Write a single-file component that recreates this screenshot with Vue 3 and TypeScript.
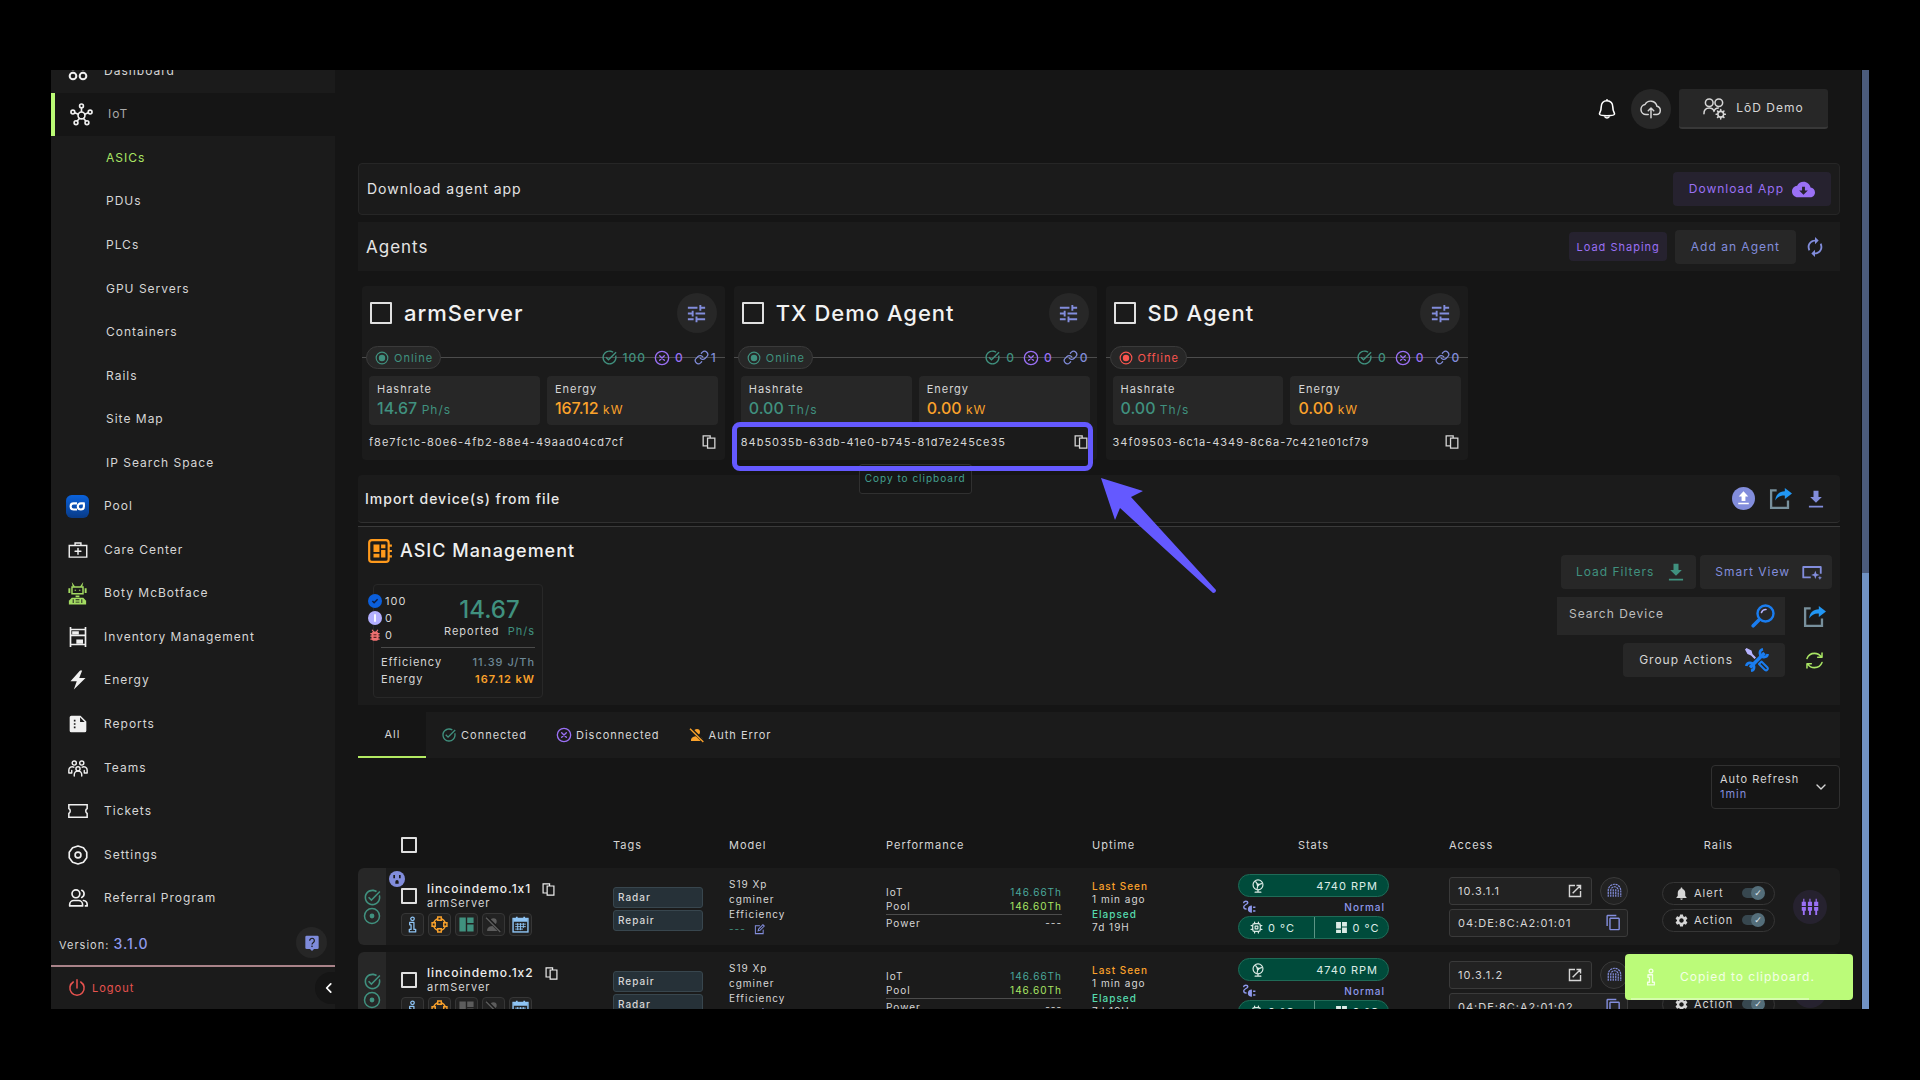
<script setup lang="ts">
import { h } from 'vue'
import type { FunctionalComponent } from 'vue'

const line = (body: string, width = 2) =>
  `<g fill="none" stroke="currentColor" stroke-width="${width}" stroke-linecap="round" stroke-linejoin="round">${body}</g>`
const fill = (d: string) => `<path fill="currentColor" fill-rule="evenodd" d="${d}"/>`

const icons: Record<string, string> = {
  dashboard: line('<circle cx="6" cy="6" r="4"/><circle cx="18" cy="6" r="4"/><circle cx="6" cy="18" r="4"/><circle cx="18" cy="18" r="4"/>', 2.4),
  iot: line('<circle cx="12" cy="13" r="3.6"/><circle cx="12" cy="3" r="2"/><circle cx="3" cy="9.500" r="2"/><circle cx="21" cy="9.500" r="2"/><circle cx="6.300" cy="20.500" r="2"/><circle cx="17.700" cy="20.500" r="2"/><path d="M12 5v4M5 10.200l3.600 1.500M19 10.200l-3.600 1.500M7.500 18.800l2.300-2.700M16.500 18.800l-2.300-2.700"/>', 1.7),
  pool: '<defs><linearGradient id="pool-fill" x2="0" y2="1"><stop stop-color="#0a62dc"/><stop offset="1" stop-color="#083a86"/></linearGradient></defs><rect width="24" height="24" rx="6" fill="url(#pool-fill)"/><path fill="none" stroke="#fff" stroke-width="2.200" d="M11.500 8.700H8a3.200 3.200 0 0 0 0 6.400h3.500M19.500 8.700H15.500a3.200 3.200 0 1 0 3.200 3.200V8.700"/>',
  care: line('<path d="M1.500 6.500h21v14h-21zM8.500 6.500v-3h7v3M12 10v7M8.500 13.500h7" stroke-linejoin="miter"/>', 1.7),
  boty: '<g fill="#a4dc62"><path d="M6 0l3.500 5H7zM18 0l-3.500 5H17z"/><path fill-rule="evenodd" d="M5.500 4.500h13V13h-13zM7 6v5.500h10V6z"/><path d="M2.500 6.500h2v5h-2zM19.500 6.500h2v5h-2zM10 14h4v2h-4z"/><path d="M6 16.500h12l3 3v4H3v-4z"/></g><path fill="#1b1b1b" d="M7 18h1v4H7zM16 18h1v4h-1zM10 18h4v1h-4zM10 20.500h4v1h-4z"/><path fill="#a4dc62" d="M9 8h1.500v1H9zM13.500 8H15v1h-1.500z"/>',
  inventory: fill('M2 0h2v2h16V0h2v24h-2v-2H4v2H2zM4 4v5h16V4zM4 11v9h16v-9z') + '<path fill="currentColor" d="M5 5h8v4H5zM10 15h8v5h-8z"/>',
  bolt: fill('M14.500 0.500L3 13.500h7.500L7 23.500L21 9.500h-7.500L17 0.500z'),
  report: fill('M4 2h11l7 7v11a2 2 0 0 1-2 2H4a2 2 0 0 1-2-2V4a2 2 0 0 1 2-2zm10.500 2v5.500H20zM7 7v2h2V7zm0 4v2h2v-2zm0 4v2h2v-2z'),
  teams: line('<circle cx="7.500" cy="6" r="2.500"/><circle cx="16.500" cy="6" r="2.500"/><circle cx="12" cy="13" r="2.500"/><path d="M1 18v-3.500a4 4 0 0 1 6-3.500M23 18v-3.500a4 4 0 0 0-6-3.500M7.500 21.500V20a4.500 4.500 0 0 1 9 0v1.500M4.500 18v-3M19.500 18v-3M1 18h3.500M19.500 18H23"/>', 1.7),
  ticket: line('<path d="M1 4.500h22v4.500a3.500 3.500 0 0 0 0 6v4.500H1V15a3.500 3.500 0 0 0 0-6z" stroke-linejoin="miter"/>', 1.8),
  settings: line('<path d="M12 1.200l6.500 2.200 4 5.200v6.800l-4 5.200L12 22.800l-6.500-2.200-4-5.200V8.600l4-5.200z"/><circle cx="12" cy="12" r="3.500"/>', 2),
  referral: line('<circle cx="9.500" cy="7" r="4.700"/><path d="M2 21.500v-1.500a5 5 0 0 1 5-5h5.500a5 5 0 0 1 5 5v1.500zM16.500 2.700a4.700 4.700 0 0 1 0 8.600M18.500 15a5 5 0 0 1 4.500 5v1.500h-2"/>', 2),
  help: fill('M4 1h16a2 2 0 0 1 2 2v16a2 2 0 0 1-2 2h-5l-3 3-3-3H4a2 2 0 0 1-2-2V3a2 2 0 0 1 2-2z') + '<path fill="none" stroke="#1c1c1c" stroke-width="1.800" d="M8.500 8.500a3.500 3.500 0 1 1 5.500 2.800c-1.500 1-2 1.500-2 3"/><circle cx="12" cy="17" r="1.200" fill="#1c1c1c"/>',
  power: line('<path d="M12 1v11M7 4a9.500 9.500 0 1 0 10 0"/>', 2),
  left: line('<path d="M15 5l-7 7 7 7"/>', 3),
  down: line('<path d="M4 8l8 8 8-8"/>', 2.8),
  bell: line('<path d="M12 2c-4.500 0-7 3.500-7 8 0 5-2 6-2 8 0 1.500 4 2 9 2s9-.500 9-2c0-2-2-3-2-8 0-4.500-2.500-8-7-8z"/><path d="M9.500 21.500a3 3 0 0 0 5 0M12 .800v1" stroke-width="1.800"/>', 1.9),
  cloudUp: line('<path d="M9 18H6.500a5.500 5.500 0 0 1-1-10.900A7 7 0 0 1 18.500 9a4.600 4.600 0 0 1 0 9H15M12 21.500V11.500M9 14l3-3 3 3"/>', 1.6),
  userGear: line('<circle cx="6.500" cy="6" r="4"/><circle cx="16.500" cy="6" r="4"/><path d="M1 17.500c0-4 2-6 5.500-6s4.500 1.500 5 3.500c.500-2 2-3.500 4.500-3.500"/><circle cx="18.500" cy="18" r="3"/><path d="M18.500 13v1.500M18.500 21.500V23M13.700 18h1.500M21.800 18h1.500M15.200 14.700l1 1M20.800 20.300l1 1M21.800 14.700l-1 1M16.200 20.300l-1 1"/>', 1.6),
  cloudDown: fill('M19.350 10.040C18.670 6.590 15.640 4 12 4 9.110 4 6.600 5.640 5.350 8.040 2.340 8.360 0 10.910 0 14c0 3.310 2.690 6 6 6h13c2.760 0 5-2.240 5-5 0-2.640-2.050-4.780-4.650-4.960zM12 17.500L7.500 13h3V9h3v4h3z'),
  sync: '<g transform="matrix(-1 0 0 1 24 0)">' + fill('M12 4V1L8 5l4 4V6c3.310 0 6 2.690 6 6 0 1.010-.250 1.970-.700 2.800l1.460 1.460A7.930 7.930 0 0 0 20 12c0-4.420-3.580-8-8-8zm0 14c-3.310 0-6-2.690-6-6 0-1.010.250-1.970.700-2.800L5.240 7.740A7.930 7.930 0 0 0 4 12c0 4.420 3.580 8 8 8v3l4-4-4-4v3z') + '</g>',
  recycle: line('<path d="M2.500 9.500C4 5.500 7.500 3 12 3c3.500 0 6.500 1.500 8.500 4.500M21.500 14.500C20 18.500 16.500 21 12 21c-3.500 0-6.500-1.500-8.500-4.500M21.500 2.500v5.500H16M2.500 21.500V16H8"/>', 1.9),
  tune: fill('M3 17v2h6v-2H3zM3 5v2h10V5H3zm10 16v-2h8v-2h-8v-2h-2v6h2zM7 9v2H3v2h4v2h2V9H7zm14 4v-2H11v2h10zm-6-4h2V7h4V5h-4V3h-2v6z'),
  target: line('<circle cx="12" cy="12" r="10"/>', 2) + '<circle cx="12" cy="12" r="5.500" fill="currentColor"/>',
  record: line('<circle cx="12" cy="12" r="10"/>', 2) + '<circle cx="12" cy="12" r="3.200" fill="currentColor"/>',
  check: fill('M22 5.180 10.590 16.600l-4.240-4.240 1.410-1.410 2.830 2.830 10-10L22 5.180zm-2.210 5.040c.130.570.210 1.170.210 1.780 0 4.420-3.580 8-8 8s-8-3.580-8-8 3.580-8 8-8c1.580 0 3.040.460 4.280 1.250l1.440-1.440C16.100 2.670 14.130 2 12 2 6.480 2 2 6.480 2 12s4.480 10 10 10 10-4.480 10-10c0-1.190-.220-2.330-.600-3.390l-1.610 1.610z'),
  cross: line('<circle cx="12" cy="12" r="10"/><path d="M8.500 8.500l7 7M15.500 8.500l-7 7"/>', 2),
  link: line('<path d="M10 13a5 5 0 0 0 7.540.540l3-3a5 5 0 0 0-7.070-7.070l-1.720 1.710M14 11a5 5 0 0 0-7.540-.540l-3 3a5 5 0 0 0 7.070 7.070l1.710-1.710"/>', 2),
  copy: line('<path d="M8.500 18.500H2v-17h12v3.500M9.500 5.500h12.500v17H9.500z" stroke-linecap="butt" stroke-linejoin="miter"/>', 2.2),
  copyFiles: fill('M16 1H4c-1.100 0-2 .900-2 2v14h2V3h12V1zm3 4H8c-1.100 0-2 .900-2 2v14c0 1.100.900 2 2 2h11c1.100 0 2-.900 2-2V7c0-1.100-.900-2-2-2zm0 16H8V7h11v14z'),
  upCircle: '<circle cx="12" cy="12" r="12" fill="currentColor"/><path fill="#fff" d="M12 4.500L7 10h3v4.500h4V10h3zM6.500 16.500h11V18h-11z"/>',
  share: '<path fill="none" stroke="#78909c" stroke-width="2.400" d="M8 3.500H2.200v18.300h17.600V14"/><path fill="#2196f3" d="M16.500 1L24 6.700l-7.500 5.700V9C12 8.800 9 10.500 6.500 14 7 8 10.500 4.700 16.500 4.500z"/>',
  download: fill('M19 9.500h-4V2H9v7.500H5l7 7 7-7zM3.500 20v2.200h17V20z'),
  smart: line('<path d="M10.500 18.500H1.500V6h21v8" stroke-linecap="butt"/>', 2.2) + '<path fill="currentColor" d="M16 10.500l1.300 3.700 3.700 1.300-3.700 1.300L16 20.500l-1.300-3.700L11 15.500l3.700-1.300zM21.500 16.500l.700 1.800 1.800.700-1.800.700-.700 1.800-.700-1.800L19 19l1.800-.700z"/>',
  search: '<circle cx="14.500" cy="9.500" r="8" fill="none" stroke="#1a7df0" stroke-width="2.400"/><path stroke="#1a7df0" stroke-width="3.600" stroke-linecap="round" d="M2.200 21.800l6-6"/><path fill="none" stroke="#b7b4ff" stroke-width="1.600" stroke-linecap="round" d="M10.500 8.500a4.500 4.500 0 0 1 4.500-3"/>',
  tools: '<path stroke="#1a7df0" stroke-width="3.600" d="M5 19.500L19.500 5"/><path fill="none" stroke="#1a7df0" stroke-width="2.600" d="M18 1.200a4 4 0 1 0 4.800 4.800M1.200 18A4 4 0 1 1 6 22.800"/><path fill="none" stroke="#1a7df0" stroke-width="2" stroke-linejoin="round" d="M14 16l2.500-2.500 6 6a1.800 1.800 0 0 1-2.500 2.500z"/><path fill="#b7b4ff" d="M0 1.500L1.500 0l5 2.500 1 3.500 3.500 3.500-1.500 1.500L6 7.500 2.500 6z"/>',
  board: line('<rect x="2" y="2" width="18" height="20" rx="2.500"/><path d="M20 7h3M20 12h3M20 17h3" stroke-linecap="butt"/>', 2) + '<path fill="currentColor" d="M6 6h5.500v7H6zM13 6h4v3.500h-4zM6 14.500h5.500V18H6zM13 11h4v7h-4z"/>',
  verified: '<circle cx="12" cy="12" r="12" fill="#0b5fdc"/><path fill="none" stroke="#111c3c" stroke-width="2.400" d="M7.500 12l3 3 6-6"/>',
  pause: '<circle cx="12" cy="12" r="12" fill="#b3afff"/><path fill="#fff" d="M10.500 5.500h3v13h-3z"/>',
  bug: '<g fill="none" stroke="#ee7070" stroke-width="2"><path d="M7 3l3 4M17 3l-3 4M4 9.500h16M4 14h16M4 19h16"/></g><rect x="6" y="6" width="12" height="16" rx="5" fill="#ee7070"/><path stroke="#5c1f1f" stroke-width="2" d="M9.500 11.500h5M9.500 16h5"/>',
  noUser: fill('M12 3a4.500 4.500 0 1 1 0 9 4.500 4.500 0 0 1 0-9zM3 20c0-4 4-6 9-6s9 2 9 6v1H3z') + '<path stroke="#1b1b1b" stroke-width="5" d="M2 2l20 20"/><path stroke="currentColor" stroke-width="2" d="M1.500 2.500l20 20"/>',
  socket: '<circle cx="12" cy="12" r="12" fill="#828ddc"/><path fill="#1a1a1a" d="M6.500 6h2.500v5H6.500zM15 6h2.500v5H15zM9.500 19v-3a2.500 2.500 0 0 1 5 0v3z"/>',
  info: '<g fill="none" stroke="currentColor" stroke-width="1.800" stroke-linejoin="round"><circle cx="12" cy="4" r="2.500"/><path d="M8 9h6v10h2.500v3.500h-9V19H10v-6.500H8z"/></g>',
  ring: '<g fill="none" stroke="currentColor" stroke-width="2"><circle cx="12" cy="12" r="8.500"/><g fill="#222"><path d="M9.500 1.500h5v4.500h-5zM9.500 18h5v4.500h-5zM1.500 9.500H6v5H1.500zM18 9.500h4.500v5H18z"/></g></g>',
  blocks: fill('M2 2h9v20H2zM13 2h9v8h-9zM13 12h9v10h-9z'),
  calendar: '<rect x="1.500" y="3.500" width="21" height="19" fill="none" stroke="currentColor" stroke-width="2"/><path fill="currentColor" d="M2 3.500h20V8H2zM5.500 1h2.500v4H5.500zM16 1h2.500v4H16z"/><path stroke="currentColor" stroke-width="1.300" d="M4.500 11.500h15M4.500 15h15M4.500 18.500h11M8 10v10M12 10v10M16 10v7"/>',
  edit: line('<path d="M12 4H3v17h17v-8M9 15l1-4 9.500-9.500 3 3L13 14z" stroke-linejoin="miter"/>', 2.2),
  fan: line('<circle cx="12" cy="10" r="8.500"/><path d="M12 10L8 4.500M12 10l6-2M12 10l-1.500 6.500M7 22.500h10M12 18.500v4"/><circle cx="12" cy="10" r="1.500"/>', 2),
  plug: line('<path d="M3 4.500C3 1.500 10 1.500 10 4.500S3 8 3 11.500s2 4 4 4"/>', 2.400) + '<path fill="currentColor" d="M17 9.500v12.500c-4.500 0-7-2.500-7-6.200s2.500-6.300 7-6.300zM19 11h4v2.500h-4zM19 17.500h4V20h-4z"/>',
  chip: line('<rect x="5" y="5" width="14" height="14" rx="3"/><rect x="9.500" y="9.500" width="5" height="5"/><path d="M8.500 2v3M15.500 2v3M8.500 19v3M15.500 19v3M2 8.500h3M2 15.500h3M19 8.500h3M19 15.500h3"/>', 2.2),
  grid: fill('M2 2h9v12H2zM13 2h9v8h-9zM2 16h9v6H2zM13 12h9v10h-9z'),
  openNew: line('<path d="M12 2.500H2.500v19h19V12M14.500 2.500h7v7M21 3L8 16" stroke-linecap="butt" stroke-linejoin="miter"/>', 2.4),
  finger: '<g fill="none" stroke="currentColor" stroke-width="1.900" stroke-dasharray="3.500 1"><path d="M2 22V12a10 10 0 0 1 20 0v10"/><path d="M6 22V12a6 6 0 0 1 12 0v10"/><path d="M10 22V10M14 22V10"/></g>',
  alert: fill('M12 22c1.100 0 2-.900 2-2h-4c0 1.100.900 2 2 2zm6-6v-5c0-3.070-1.640-5.640-4.500-6.320V4c0-.830-.670-1.500-1.500-1.500s-1.500.670-1.500 1.500v.680C7.630 5.360 6 7.920 6 11v5l-2 2v1h16v-1l-2-2z'),
  gear: fill('M19.140 12.940c.040-.300.060-.610.060-.940 0-.320-.020-.640-.070-.940l2.030-1.580c.180-.140.230-.410.120-.610l-1.920-3.320c-.120-.220-.370-.290-.590-.220l-2.390.960c-.500-.380-1.030-.700-1.620-.940l-.360-2.540c-.040-.240-.240-.410-.480-.410h-3.840c-.240 0-.430.170-.470.410l-.360 2.540c-.590.240-1.130.570-1.620.940l-2.390-.960c-.220-.080-.470 0-.590.220L2.740 8.870c-.120.210-.080.470.120.610l2.030 1.580c-.050.300-.090.630-.090.940s.020.640.070.940l-2.030 1.580c-.180.140-.230.410-.120.610l1.920 3.320c.120.220.370.290.590.220l2.390-.960c.500.380 1.030.700 1.620.940l.360 2.540c.050.240.240.410.480.410h3.840c.240 0 .440-.170.470-.410l.360-2.540c.590-.240 1.130-.560 1.620-.940l2.390.960c.220.080.470 0 .590-.220l1.920-3.320c.120-.220.070-.470-.120-.610l-2.010-1.580zM12 15.600c-1.980 0-3.600-1.620-3.600-3.600s1.620-3.600 3.600-3.600 3.600 1.620 3.600 3.600-1.620 3.600-3.600 3.600z'),
  rails: '<g fill="currentColor"><path d="M3 1h1.500v4H6.500v5.500H1V5h2zM1 12h5.500v5H5v5.500H2.500V17H1z"/><path d="M11.200 1h1.500v4h2v5.500H9.200V5h2zM9.200 12h5.500v5h-1.500v5.500h-2.500V17H9.200z"/><path d="M19.500 1H21v4h2v5.500h-5.500V5h2zM17.500 12H23v5h-1.500v5.500H19V17h-1.500z"/></g>',
}

const Icon: FunctionalComponent<{ name: string; size?: number }> = (props) =>
  h('svg', {
    class: 'icon',
    viewBox: '0 0 24 24',
    width: props.size ?? 18,
    height: props.size ?? 18,
    'aria-hidden': 'true',
    innerHTML: icons[props.name],
  })
Icon.props = ['name', 'size']

interface NavItem { label: string; icon?: string; kind?: 'active' | 'child' | 'current' }
const nav: NavItem[] = [
  { label: 'Dashboard', icon: 'dashboard' },
  { label: 'IoT', icon: 'iot', kind: 'active' },
  { label: 'ASICs', kind: 'current' },
  { label: 'PDUs', kind: 'child' },
  { label: 'PLCs', kind: 'child' },
  { label: 'GPU Servers', kind: 'child' },
  { label: 'Containers', kind: 'child' },
  { label: 'Rails', kind: 'child' },
  { label: 'Site Map', kind: 'child' },
  { label: 'IP Search Space', kind: 'child' },
  { label: 'Pool', icon: 'pool' },
  { label: 'Care Center', icon: 'care' },
  { label: 'Boty McBotface', icon: 'boty' },
  { label: 'Inventory Management', icon: 'inventory' },
  { label: 'Energy', icon: 'bolt' },
  { label: 'Reports', icon: 'report' },
  { label: 'Teams', icon: 'teams' },
  { label: 'Tickets', icon: 'ticket' },
  { label: 'Settings', icon: 'settings' },
  { label: 'Referral Program', icon: 'referral' },
]
const iconSize = (name: string) => (name === 'pool' || name === 'iot' || name === 'boty' ? 23 : 20)

const agents = [
  { name: 'armServer', online: true, up: 100, down: 0, links: 1, hash: '14.67', unit: 'Ph/s', energy: '167.12', id: 'f8e7fc1c-80e6-4fb2-88e4-49aad04cd7cf', copied: false },
  { name: 'TX Demo Agent', online: true, up: 0, down: 0, links: 0, hash: '0.00', unit: 'Th/s', energy: '0.00', id: '84b5035b-63db-41e0-b745-81d7e245ce35', copied: true },
  { name: 'SD Agent', online: false, up: 0, down: 0, links: 0, hash: '0.00', unit: 'Th/s', energy: '0.00', id: '34f09503-6c1a-4349-8c6a-7c421e01cf79', copied: false },
]

const tabs = [
  { label: 'All', icon: '', tone: '' },
  { label: 'Connected', icon: 'check', tone: 'teal' },
  { label: 'Disconnected', icon: 'cross', tone: 'violet' },
  { label: 'Auth Error', icon: 'noUser', tone: 'orange' },
]

const devices = [
  { name: 'lincoindemo.1x1', socket: true, tags: ['Radar', 'Repair'], blocks: 'teal', ip: '10.3.1.1', mac: '04:DE:8C:A2:01:01' },
  { name: 'lincoindemo.1x2', socket: false, tags: ['Repair', 'Radar'], blocks: 'dim', ip: '10.3.1.2', mac: '04:DE:8C:A2:01:02' },
]
const rails = [
  { label: 'Alert', icon: 'alert' },
  { label: 'Action', icon: 'gear' },
]
</script>

<template>
  <div class="stage">
    <div class="window">
      <aside class="sidebar">
        <nav class="nav">
          <a v-for="item in nav" :key="item.label" href="#" class="nav-item" :class="item.kind">
            <span v-if="item.icon" class="nav-icon"><Icon :name="item.icon" :size="iconSize(item.icon)" /></span>
            {{ item.label }}
          </a>
        </nav>
        <div class="version">
          <span>Version: <b>3.1.0</b></span>
          <button class="help" aria-label="Help"><Icon name="help" :size="16" /></button>
        </div>
        <div class="logout">
          <a href="#"><Icon name="power" :size="18" />Logout</a>
          <button class="collapse" aria-label="Collapse menu"><Icon name="left" :size="14" /></button>
        </div>
      </aside>

      <main class="main">
        <header class="topbar">
          <button class="plain" aria-label="Notifications"><Icon name="bell" :size="20" /></button>
          <button class="round" aria-label="Upload"><Icon name="cloudUp" :size="22" /></button>
          <button class="account"><Icon name="userGear" :size="23" />LōD Demo</button>
        </header>

        <section class="download">
          <h2>Download agent app</h2>
          <button class="btn violet-btn wide">Download App<Icon name="cloudDown" :size="23" /></button>
        </section>

        <section class="agents-bar">
          <h2>Agents</h2>
          <button class="btn violet-btn small">Load Shaping</button>
          <button class="btn peri wide">Add an Agent</button>
          <button class="plain peri sync" aria-label="Refresh agents"><Icon name="sync" :size="22" /></button>
        </section>

        <section class="agents">
          <article v-for="agent in agents" :key="agent.id" class="agent">
            <div class="agent-head">
              <label><input type="checkbox" class="box large" />{{ agent.name }}</label>
              <button class="round peri" aria-label="Agent settings"><Icon name="tune" :size="23" /></button>
            </div>
            <div class="agent-status">
              <span class="chip" :class="agent.online ? 'teal' : 'red'">
                <Icon name="target" :size="14" />{{ agent.online ? 'Online' : 'Offline' }}
              </span>
              <span class="count teal"><Icon name="check" :size="17" />{{ agent.up }}</span>
              <span class="count violet"><Icon name="cross" :size="16" />{{ agent.down }}</span>
              <span class="count links peri"><Icon name="link" :size="15" />{{ agent.links }}</span>
            </div>
            <div class="metrics">
              <div class="metric">
                <span>Hashrate</span>
                <span class="value teal"><b>{{ agent.hash }}</b> {{ agent.unit }}</span>
              </div>
              <div class="metric">
                <span>Energy</span>
                <span class="value orange"><b>{{ agent.energy }}</b> kW</span>
              </div>
            </div>
            <div class="agent-id">
              <span>{{ agent.id }}</span>
              <button class="plain" aria-label="Copy agent id"><Icon name="copy" :size="14" /></button>
            </div>
            <template v-if="agent.copied">
              <div class="tooltip">Copy to clipboard</div>
              <div class="highlight"></div>
              <svg class="arrow" viewBox="0 0 116 116" width="116" height="116" aria-hidden="true">
                <path fill="#6459ff" d="M0 0L42 13L30 19L115 112Q115 115 112 115L19 30L14 42Z" />
              </svg>
            </template>
          </article>
        </section>

        <section class="import">
          <h3>Import device(s) from file</h3>
          <button class="plain peri" aria-label="Upload file"><Icon name="upCircle" :size="23" /></button>
          <button class="plain" aria-label="Export"><Icon name="share" :size="23" /></button>
          <button class="plain peri" aria-label="Download template"><Icon name="download" :size="20" /></button>
        </section>

        <section class="manage">
          <div class="manage-left">
            <h1><Icon name="board" :size="26" />ASIC Management</h1>
            <div class="summary">
              <div class="summary-top">
                <ul>
                  <li><Icon name="verified" :size="14" />100</li>
                  <li><Icon name="pause" :size="14" />0</li>
                  <li><Icon name="bug" :size="14" />0</li>
                </ul>
                <div class="reported">
                  <strong class="teal">14.67</strong>
                  <span>Reported <em class="teal">Ph/s</em></span>
                </div>
              </div>
              <dl>
                <dt>Efficiency</dt><dd class="steel">11.39 J/Th</dd>
                <dt>Energy</dt><dd class="orange strong">167.12 kW</dd>
              </dl>
            </div>
          </div>
          <div class="manage-right">
            <div class="tools top">
              <button class="btn teal">Load Filters<Icon name="download" :size="20" /></button>
              <button class="btn peri">Smart View<Icon name="smart" :size="20" /></button>
            </div>
            <div class="tools">
              <div class="search">
                <input type="search" placeholder="Search Device" aria-label="Search Device" />
                <Icon name="search" :size="24" />
              </div>
              <button class="plain slot" aria-label="Export devices"><Icon name="share" :size="23" /></button>
            </div>
            <div class="tools">
              <button class="btn wide">Group Actions<Icon name="tools" :size="24" /></button>
              <button class="plain slot lime" aria-label="Refresh devices"><Icon name="recycle" :size="19" /></button>
            </div>
          </div>
        </section>

        <div class="tabs" role="tablist">
          <button v-for="(tab, i) in tabs" :key="tab.label" role="tab" :aria-selected="i === 0" :class="{ selected: i === 0 }">
            <Icon v-if="tab.icon" :name="tab.icon" :size="16" :class="tab.tone" />{{ tab.label }}
          </button>
        </div>

        <div class="refresh">
          <div class="refresh-text">
            <label for="auto-refresh">Auto Refresh</label>
            <select id="auto-refresh"><option>1min</option><option>5min</option></select>
          </div>
          <Icon name="down" :size="12" />
        </div>

        <table>
          <colgroup>
            <col class="c-strip" /><col class="c-name" /><col class="c-tags" /><col class="c-model" /><col class="c-perf" />
            <col class="c-up" /><col class="c-stats" /><col class="c-access" /><col class="c-rails" />
          </colgroup>
          <thead>
            <tr>
              <td></td>
              <th class="name"><input type="checkbox" class="box" aria-label="Select all" /></th>
              <th>Tags</th><th>Model</th><th>Performance</th><th>Uptime</th>
              <th class="stats">Stats</th><th>Access</th><th class="rails-head">Rails</th>
            </tr>
          </thead>
          <tbody>
            <tr v-for="device in devices" :key="device.name">
              <td class="strip teal"><Icon name="check" :size="19" /><Icon name="record" :size="18" /></td>
              <td class="name">
                <span v-if="device.socket" class="socket"><Icon name="socket" :size="16" /></span>
                <div class="device">
                  <input type="checkbox" class="box" :aria-label="device.name" />
                  <div>
                    <div class="device-name">{{ device.name }}<button class="plain" aria-label="Copy name"><Icon name="copy" :size="13" /></button></div>
                    <div class="device-agent">armServer</div>
                  </div>
                </div>
                <div class="device-tools">
                  <button class="sky" aria-label="Info"><Icon name="info" :size="17" /></button>
                  <button class="orange" aria-label="Chain"><Icon name="ring" :size="17" /></button>
                  <button :class="device.blocks" aria-label="Boards"><Icon name="blocks" :size="17" /></button>
                  <button class="dim" aria-label="Auth"><Icon name="noUser" :size="17" /></button>
                  <button class="sky" aria-label="Schedule"><Icon name="calendar" :size="17" /></button>
                </div>
              </td>
              <td><div class="tags"><span v-for="tag in device.tags" :key="tag">{{ tag }}</span></div></td>
              <td class="model">
                <div>S19 Xp</div><div>cgminer</div><div>Efficiency</div>
                <div class="teal">--- <button class="plain peri" aria-label="Edit"><Icon name="edit" :size="11" /></button></div>
              </td>
              <td>
                <div class="perf">
                  <div><span>IoT</span><span class="aqua">146.66Th</span></div>
                  <div><span>Pool</span><span class="lime">146.60Th</span></div>
                  <div class="power"><span>Power</span><span>---</span></div>
                </div>
              </td>
              <td class="uptime">
                <div class="orange">Last Seen</div><div>1 min ago</div>
                <div class="mint">Elapsed</div><div>7d 19H</div>
              </td>
              <td class="stats">
                <div class="pill rpm"><Icon name="fan" :size="14" />4740 RPM</div>
                <div class="normal"><Icon name="plug" :size="14" />Normal</div>
                <div class="pill temps">
                  <span><Icon name="chip" :size="13" />0 °C</span>
                  <span><Icon name="grid" :size="13" />0 °C</span>
                </div>
              </td>
              <td>
                <div class="access">
                  <div class="access-row">
                    <a href="#" class="field">{{ device.ip }}<Icon name="openNew" :size="14" /></a>
                    <button class="finger" aria-label="Identify"><Icon name="finger" :size="15" /></button>
                  </div>
                  <div class="field">{{ device.mac }}<button class="plain peri" aria-label="Copy MAC"><Icon name="copyFiles" :size="17" /></button></div>
                </div>
              </td>
              <td>
                <div class="rails">
                  <div class="rails-toggles">
                    <label v-for="rail in rails" :key="rail.label">
                      <Icon :name="rail.icon" :size="15" /><span>{{ rail.label }}</span><input type="checkbox" class="switch" checked />
                    </label>
                  </div>
                  <button class="rails-btn" aria-label="Rails"><Icon name="rails" :size="18" /></button>
                </div>
              </td>
            </tr>
          </tbody>
        </table>

        <div class="toast" role="status"><Icon name="info" :size="18" /><span>Copied to clipboard.</span></div>
      </main>

      <div class="scrollbar"><div class="thumb"></div></div>
    </div>
  </div>
</template>

<style>
body {
  margin: 0;
  background: #000;
}
</style>

<style scoped>
.stage {
  box-sizing: border-box;
  height: 100vh;
  padding: 70px 51px 71px;
  background: #000;
  color: #d6d6d6;
  font: 12px/16px Inter, 'Liberation Sans', sans-serif;
  letter-spacing: 1px;
  overflow: hidden;
}
.stage *,
.stage *::before,
.stage *::after {
  box-sizing: border-box;
}
.window {
  display: flex;
  height: 100%;
  background: #151515;
  overflow: hidden;
}
button,
input,
select {
  font: inherit;
  letter-spacing: inherit;
  color: inherit;
}
button {
  display: flex;
  align-items: center;
  justify-content: center;
  padding: 0;
  border: 0;
  background: none;
}
a {
  color: inherit;
  text-decoration: none;
}
h1,
h2,
h3,
ul,
dl,
dd {
  margin: 0;
  padding: 0;
  font-weight: 500;
}
.icon {
  display: block;
  flex: none;
}
.teal { color: #40917f; }
.violet { color: #9a70f5; }
.peri { color: #828ddc; }
.orange { color: #fba22b; }
.red { color: #f9554f; }
.lime { color: #a9e564; }
.aqua { color: #4aa89a; }
.mint { color: #56dcae; }
.sky { color: #8ec4f4; }
.steel { color: #6d8896; }
.dim { color: #5c5c5c; }

.sidebar {
  display: flex;
  flex: none;
  flex-direction: column;
  width: 284px;
  background: #1b1b1b;
}
.nav {
  display: flex;
  flex: 1;
  flex-direction: column;
  margin-top: -21px;
}
.nav-item {
  display: flex;
  flex: 1;
  align-items: center;
  padding-left: 15px;
}
.nav-icon {
  display: flex;
  justify-content: center;
  width: 23px;
  margin-right: 15px;
  color: #f0f0f0;
}
.nav-item.child,
.nav-item.current {
  padding-left: 55px;
}
.nav-item.current {
  color: #a9e564;
}
.nav-item.active {
  padding-left: 15px;
  border-left: 4px solid #bafa74;
  background: #151515;
  color: #a8a8a8;
}
.version {
  display: flex;
  align-items: center;
  justify-content: space-between;
  height: 45px;
  padding: 0 8px;
  font-size: 11px;
}
.version span {
  padding-top: 4px;
}
.version b {
  color: #8f9aec;
  font-size: 14px;
  font-weight: 500;
}
.help {
  width: 31px;
  height: 31px;
  border-radius: 50%;
  background: #262626;
  color: #7e8bdb;
}
.logout {
  display: flex;
  align-items: center;
  justify-content: space-between;
  height: 44px;
  padding-left: 17px;
  border-top: 2px solid #a98389;
  color: #e8534f;
  font-size: 11px;
  overflow: hidden;
}
.logout a {
  display: flex;
  align-items: center;
  gap: 6px;
}
.collapse {
  width: 20px;
  height: 32px;
  padding-left: 8px;
  border-radius: 16px 0 0 16px;
  background: #151515;
  color: #fff;
}

.main {
  position: relative;
  flex: 1;
  min-width: 0;
  padding: 0 21px 0 23px;
  overflow: hidden;
}
.scrollbar {
  display: grid;
  flex: none;
  grid-template-rows: 15fr 13fr;
  width: 8px;
  border-left: 1px solid #0a0a0a;
  background: #4b5b7c;
}
.thumb {
  grid-row: 2;
  background: #7092c4;
}
.topbar {
  display: flex;
  align-items: center;
  justify-content: flex-end;
  gap: 8px;
  height: 93px;
  padding: 0 12px 15px 0;
}
.topbar .plain {
  margin-right: 6px;
  color: #fff;
}
.round {
  width: 40px;
  height: 40px;
  border-radius: 50%;
  background: #272727;
}
.account {
  gap: 10px;
  width: 149px;
  height: 40px;
  border-radius: 3px;
  border-bottom: 2px solid #383838;
  background: #272727;
}
.download {
  display: flex;
  align-items: center;
  justify-content: space-between;
  height: 52px;
  padding: 0 8px;
  border: 1px solid #262626;
  border-radius: 4px;
  background: #1b1b1b;
}
.download h2 {
  font-size: 14px;
  font-weight: 400;
  color: #e4e4e4;
}
.btn {
  height: 34px;
  gap: 8px;
  border-radius: 4px;
  background: #272727;
}
.wide {
  padding: 0 16px;
}
.violet-btn {
  background: #26222f;
  color: #9a70f5;
}
.small {
  height: 29px;
  padding: 0 7px;
  font-size: 11px;
}
.agents-bar {
  display: flex;
  align-items: center;
  gap: 8px;
  height: 49px;
  margin-top: 7px;
  padding: 0 14px 0 8px;
  background: #1b1b1b;
}
.agents-bar h2 {
  flex: 1;
  font-size: 17px;
  font-weight: 400;
  color: #e4e4e4;
}
.agents {
  display: grid;
  grid-template-columns: repeat(4, 1fr);
  gap: 9px;
  padding: 15px 0 15px 4px;
}
.agent {
  position: relative;
  padding-top: 7px;
  border-radius: 4px;
  background: #1b1b1b;
}
.agent-head {
  display: flex;
  align-items: center;
  justify-content: space-between;
  height: 40px;
  padding: 0 8px;
}
.agent-head label {
  display: flex;
  align-items: center;
  gap: 12px;
  color: #f2f2f2;
  font-size: 22px;
  font-weight: 500;
}
.box {
  display: block;
  flex: none;
  width: 16px;
  height: 16px;
  margin: 0;
  border: 2px solid #e0e0e0;
  border-radius: 1px;
  appearance: none;
  background: none;
}
.box.large {
  width: 22px;
  height: 22px;
}
.agent-status {
  position: relative;
  display: flex;
  align-items: center;
  height: 23px;
  margin: 13px 0 7px;
  padding: 0 8px 0 4px;
}
.agent-status::before {
  content: '';
  position: absolute;
  inset: 11px 0 auto;
  border-top: 1px solid #4c4c4c;
}
.chip {
  position: relative;
  display: flex;
  align-items: center;
  gap: 5px;
  height: 23px;
  margin-right: auto;
  padding: 0 7px 0 8px;
  border: 1px solid #3a3a3a;
  border-radius: 12px;
  background: #272727;
  font-size: 11px;
}
.count {
  position: relative;
  display: flex;
  align-items: center;
  gap: 5px;
  margin-left: 8px;
  font-weight: 500;
}
.links {
  gap: 2px;
  margin-left: 10px;
}
.metrics {
  display: flex;
  gap: 7px;
  padding: 0 7px;
}
.metric {
  display: flex;
  flex: 1;
  flex-direction: column;
  justify-content: center;
  gap: 1px;
  height: 49px;
  padding: 0 8px 3px;
  border-radius: 4px;
  background: #272727;
  font-size: 11px;
}
.metric span {
  line-height: 18px;
}
.metric .value {
  font-size: 12px;
}
.metric b {
  font-size: 16px;
  font-weight: 500;
  letter-spacing: 0;
}
.agent-id {
  display: flex;
  align-items: center;
  justify-content: space-between;
  height: 35px;
  padding: 0 9px 1px 7px;
  font-size: 11px;
}
.tooltip {
  position: absolute;
  z-index: 1;
  top: 178px;
  left: 125px;
  display: flex;
  align-items: center;
  height: 30px;
  padding: 0 5px 2px;
  border: 1px solid #303030;
  border-radius: 3px;
  background: #161616;
  color: #44a090;
  font-size: 10px;
}
.highlight {
  position: absolute;
  z-index: 2;
  inset: 136px 4px auto -2px;
  height: 49px;
  border: 5px solid #6459ff;
  border-radius: 8px;
}
.arrow {
  position: absolute;
  z-index: 2;
  top: 192px;
  left: calc(100% + 4px);
}
.import {
  display: flex;
  align-items: center;
  gap: 14px;
  height: 48px;
  padding: 0 14px 0 7px;
  border-bottom: 1px solid #303030;
  border-radius: 4px;
  background: #1b1b1b;
}
.import h3 {
  flex: 1;
  font-size: 14px;
  color: #e8e8e8;
}
.manage {
  display: flex;
  justify-content: space-between;
  height: 179px;
  margin-top: 3px;
  padding: 0 8px 0 9px;
  border-top: 1px solid #3a3a3a;
  background: #1b1b1b;
}
.manage h1 {
  display: flex;
  align-items: center;
  gap: 7px;
  height: 48px;
  font-size: 18px;
  color: #f0f0f0;
}
.manage h1 .icon {
  color: #ff9a1c;
}
.summary {
  width: 170px;
  height: 114px;
  margin: 9px 0 0 6px;
  padding: 7px 7px 0 0;
  border: 1px solid #282828;
  border-radius: 4px;
}
.summary-top {
  display: flex;
  justify-content: space-between;
}
.summary ul {
  margin-left: -6px;
  list-style: none;
}
.summary li {
  display: flex;
  align-items: center;
  gap: 3px;
  height: 17px;
  font-size: 11px;
  font-weight: 400;
}
.reported {
  display: flex;
  flex-direction: column;
  align-items: center;
  padding-top: 5px;
  font-size: 11px;
}
.reported strong {
  font-size: 24px;
  font-weight: 500;
  line-height: 26px;
  letter-spacing: 0;
}
.reported em {
  margin-left: 4px;
  font-style: normal;
}
.summary dl {
  display: grid;
  grid-template-columns: auto auto;
  margin: 4px 0 0 7px;
  padding-top: 6px;
  border-top: 1px solid #4a4a4a;
  font-size: 11px;
  line-height: 17px;
}
.summary dt {
  font-weight: 400;
}
.summary dd {
  text-align: right;
}
.summary .strong {
  font-weight: 600;
}
.manage-right {
  display: flex;
  flex-direction: column;
  gap: 8px;
  padding-top: 28px;
}
.tools {
  display: flex;
  justify-content: flex-end;
  align-items: center;
}
.tools.top {
  gap: 4px;
}
.tools.top .btn {
  padding: 0 10px 0 15px;
}
.tools .btn .icon {
  margin-left: 4px;
}
.slot {
  width: 47px;
  padding-left: 12px;
}
.search {
  display: flex;
  align-items: center;
  width: 228px;
  height: 38px;
  padding-right: 10px;
  background: #272727;
}
.search input {
  flex: 1;
  min-width: 0;
  padding: 0 0 4px 12px;
  border: 0;
  outline: 0;
  background: none;
}
.search input::placeholder {
  color: #bdbdbd;
  opacity: 1;
}
.tabs {
  display: flex;
  height: 46px;
  margin-top: 7px;
  background: #1b1b1b;
  font-size: 11px;
}
.tabs button {
  gap: 4px;
  padding: 0 14px 0 15px;
}
.tabs .selected {
  width: 68px;
  border-bottom: 2px solid #b3ea62;
  background: #151515;
}
.refresh {
  display: flex;
  align-items: center;
  justify-content: space-between;
  width: 129px;
  height: 44px;
  margin: 7px 0 13px auto;
  padding: 0 12px 0 8px;
  border: 1px solid #303030;
  border-radius: 4px;
  font-size: 11px;
  line-height: 15px;
}
.refresh-text {
  display: flex;
  flex-direction: column;
}
.refresh select {
  height: 15px;
  padding: 0;
  border: 0;
  appearance: none;
  background: none;
  color: #828ddc;
  line-height: 15px;
}

table {
  width: 100%;
  border-spacing: 0 7px;
  table-layout: fixed;
  font-size: 11px;
}
.c-strip { width: 28px; }
.c-name { width: 227px; }
.c-tags { width: 116px; }
.c-model { width: 157px; }
.c-perf { width: 206px; }
.c-up { width: 146px; }
.c-stats { width: 211px; }
.c-access { width: 213px; }
.c-rails { width: 178px; }
th {
  height: 32px;
  padding: 0;
  font-weight: 400;
  text-align: left;
}
td {
  padding: 0;
}
td.name,
th.name {
  padding-left: 15px;
}
tbody td {
  height: 77px;
  background: #1b1b1b;
}
tbody td:last-child {
  border-radius: 0 6px 6px 0;
}
th.stats {
  text-align: center;
}
.stats {
  padding-right: 60px;
}
th.rails-head {
  padding-right: 65px;
  text-align: center;
}
tbody .strip {
  padding-left: 5px;
  border-radius: 6px 0 0 6px;
  background: #272727;
}
tbody .name {
  position: relative;
  padding-top: 13px;
  vertical-align: top;
}
.socket {
  position: absolute;
  top: 3px;
  left: 3px;
}
.device {
  display: flex;
  align-items: center;
  gap: 10px;
}
.device-name {
  display: flex;
  align-items: center;
  gap: 11px;
  color: #eee;
  font-size: 12px;
  font-weight: 500;
}
.device-agent {
  line-height: 13px;
}
.device-tools {
  display: flex;
  gap: 4px;
  margin-top: 3px;
}
.device-tools button {
  width: 23px;
  height: 23px;
  border: 1px solid #363636;
  border-radius: 4px;
  background: #222;
}
.tags {
  display: flex;
  flex-direction: column;
  gap: 2px;
  width: 90px;
  padding-top: 4px;
}
.tags span {
  height: 21px;
  padding: 0 4px;
  border: 1px solid #38464e;
  border-radius: 3px;
  background: #263138;
  font-size: 10px;
  font-weight: 500;
  line-height: 18px;
}
.model div {
  display: flex;
  gap: 8px;
  font-size: 10px;
  line-height: 15px;
}
.perf {
  width: 176px;
  padding-top: 1px;
  font-size: 10px;
  line-height: 14px;
}
.perf div {
  display: flex;
  justify-content: space-between;
}
.perf .power {
  margin-top: 1px;
  padding-top: 1px;
  border-top: 1px solid #4c4c4c;
}
.uptime div {
  font-size: 10px;
  line-height: 13px;
}
.uptime .orange,
.uptime .mint {
  font-weight: 500;
}
.uptime .mint {
  margin-top: 2px;
}
.pill {
  display: flex;
  align-items: center;
  height: 23px;
  border: 1px solid #1f6b57;
  border-radius: 12px;
  background: #004b3b;
  color: #dcebe6;
}
.rpm {
  justify-content: space-between;
  padding: 0 10px 0 12px;
}
.normal {
  display: flex;
  align-items: center;
  justify-content: space-between;
  height: 19px;
  padding: 0 4px;
  color: #8e98ea;
  font-size: 10px;
  font-weight: 500;
}
.temps span {
  display: flex;
  align-items: center;
  gap: 5px;
  width: 50%;
  height: 100%;
  padding-left: 11px;
}
.temps span + span {
  padding-left: 20px;
  border-left: 1px solid #5c9485;
}
.access {
  display: flex;
  flex-direction: column;
  gap: 4px;
  width: 179px;
}
.access-row {
  display: flex;
  gap: 8px;
}
.field {
  display: flex;
  flex: 1;
  align-items: center;
  justify-content: space-between;
  height: 28px;
  padding: 0 9px 0 8px;
  border: 1px solid #3a3a3a;
  border-radius: 3px;
  background: #222;
}
.field .plain {
  margin-right: -4px;
}
.access > .field {
  flex: none;
}
.finger {
  width: 28px;
  height: 28px;
  border: 1px solid #3a3a3a;
  border-radius: 50%;
  background: #222;
  color: #828ddc;
}
.rails {
  display: flex;
  align-items: center;
  gap: 18px;
}
.rails-toggles {
  display: flex;
  flex-direction: column;
  gap: 4px;
  width: 113px;
}
.rails label {
  display: flex;
  align-items: center;
  gap: 5px;
  height: 23px;
  padding: 0 10px 0 11px;
  border: 1px solid #363636;
  border-radius: 12px;
}
.rails label span {
  flex: 1;
}
.switch {
  position: relative;
  width: 22px;
  height: 10px;
  margin: 0;
  border-radius: 5px;
  appearance: none;
  background: #37474f;
}
.switch::before {
  content: '✓';
  position: absolute;
  top: -2px;
  right: -1px;
  width: 14px;
  height: 14px;
  border-radius: 50%;
  background: #546e7a;
  color: #e0e8ec;
  font: 9px/14px 'DejaVu Sans', sans-serif;
  letter-spacing: 0;
  text-align: center;
}
.rails-btn {
  width: 34px;
  height: 34px;
  border-radius: 50%;
  background: #26222f;
  color: #9a70f5;
}
.toast {
  position: absolute;
  right: 8px;
  bottom: 9px;
  display: flex;
  align-items: center;
  gap: 20px;
  width: 228px;
  height: 46px;
  padding-left: 17px;
  border-radius: 4px;
  background: #bbfb79;
  color: #f4ffe6;
}
.toast::after {
  content: '';
  position: absolute;
  bottom: 0;
  left: 6px;
  width: 78%;
  height: 2px;
  background: #d5fcab;
}
</style>
